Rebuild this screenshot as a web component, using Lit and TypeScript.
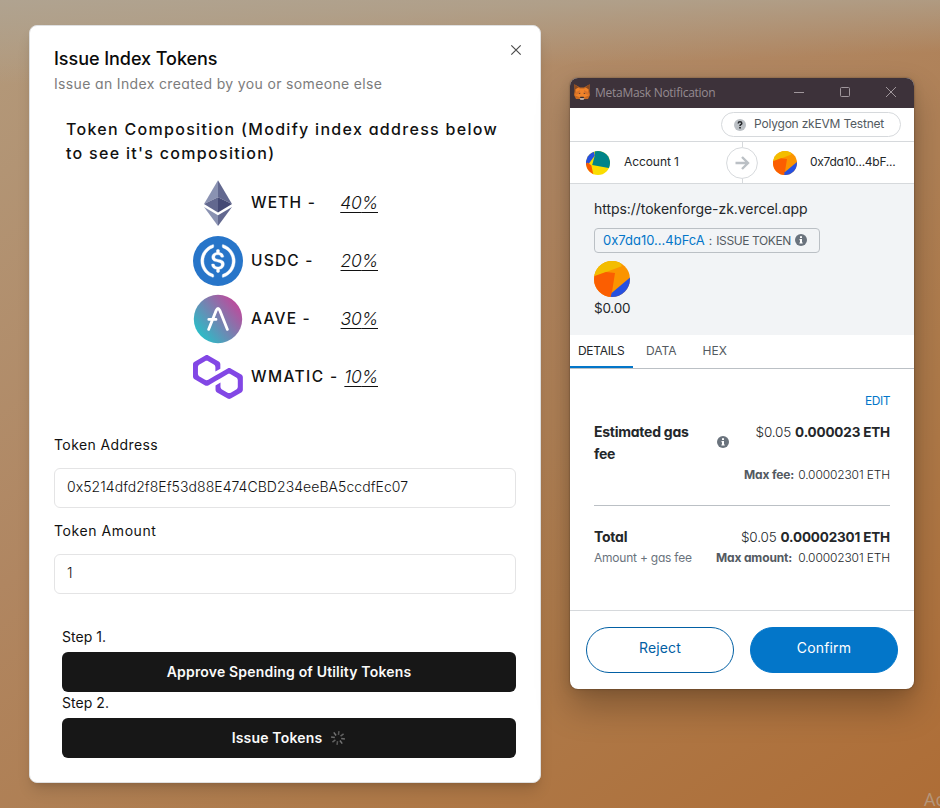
import { LitElement, html, css, svg } from "lit";
import { customElement, property } from "lit/decorators.js";

const ethIcon = svg`
  <path fill="#8a92b2" d="M25 2.3 11 26 25 19.2z"/>
  <path fill="#62688f" d="M25 2.3 39 26 25 19.2z"/>
  <path fill="#62688f" d="M11 26 25 19.2V34.4z"/>
  <path fill="#454a75" d="M39 26 25 19.2V34.4z"/>
  <path fill="#8a92b2" d="M11 29 25 37.3V48z"/>
  <path fill="#62688f" d="M39 29 25 37.3V48z"/>`;

const usdcIcon = svg`
  <g transform="scale(1.5625)">
    <circle cx="16" cy="16" r="16" fill="#2775c9"/>
    <g fill="#fff" stroke="#fff" stroke-width=".25">
      <path d="M20.022 18.124c0-2.124-1.28-2.852-3.84-3.156-1.828-.243-2.193-.728-2.193-1.578 0-.85.61-1.396 1.828-1.396 1.097 0 1.707.364 2.011 1.275a.458.458 0 00.427.303h.975a.416.416 0 00.427-.425v-.06a3.04 3.04 0 00-2.743-2.489V9.142c0-.243-.183-.425-.487-.486h-.915c-.243 0-.426.182-.487.486v1.396c-1.829.242-2.986 1.456-2.986 2.974 0 2.002 1.218 2.791 3.778 3.095 1.707.303 2.255.668 2.255 1.639 0 .97-.853 1.638-2.011 1.638-1.585 0-2.133-.667-2.316-1.578-.06-.242-.244-.364-.427-.364h-1.036a.416.416 0 00-.426.425v.06c.243 1.518 1.219 2.61 3.23 2.914v1.457c0 .242.183.425.487.485h.915c.243 0 .426-.182.487-.485V21.34c1.829-.303 3.047-1.578 3.047-3.217z"/>
      <path d="M12.892 24.497c-4.754-1.7-7.192-6.98-5.424-11.653.914-2.55 2.925-4.491 5.424-5.402.244-.121.365-.303.365-.607v-.85c0-.242-.121-.424-.365-.485-.061 0-.183 0-.244.06a10.895 10.895 0 00-7.13 13.717c1.096 3.4 3.717 6.01 7.13 7.102.244.121.488 0 .548-.243.061-.06.061-.122.061-.243v-.85c0-.182-.182-.424-.365-.546zm6.46-18.936c-.244-.122-.488 0-.548.242-.061.061-.061.122-.061.243v.85c0 .243.182.485.365.607 4.754 1.7 7.192 6.98 5.424 11.653-.914 2.55-2.925 4.491-5.424 5.402-.244.121-.365.303-.365.607v.85c0 .242.121.424.365.485.061 0 .183 0 .244-.06a10.895 10.895 0 007.13-13.717c-1.096-3.46-3.778-6.07-7.13-7.162z"/>
    </g>
  </g>`;

const aaveIcon = svg`
  <defs><linearGradient id="aave" x1="0.12" y1="0.8" x2="0.85" y2="0.2">
    <stop offset="0" stop-color="#2ebac6"/><stop offset="1" stop-color="#b6509e"/>
  </linearGradient></defs>
  <circle cx="25" cy="25" r="24.2" fill="url(#aave)"/>
  <path d="M15.6 35.4 23.2 16.4Q25 12.6 26.8 16.4L34.4 35.4M15.8 25.4H23" fill="none" stroke="#fff" stroke-width="2.8" stroke-linecap="round"/>`;

const maticIcon = svg`
  <g transform="translate(0 3.2) scale(1.302)"><path fill="#8247e5" d="M29,10.2c-0.7-0.4-1.6-0.4-2.4,0L21,13.5l-3.8,2.1l-5.5,3.3c-0.7,0.4-1.6,0.4-2.4,0L5,16.3c-0.7-0.4-1.2-1.2-1.2-2.1v-5c0-0.8,0.4-1.6,1.2-2.1l4.3-2.5c0.7-0.4,1.6-0.4,2.4,0L16,7.2c0.7,0.4,1.2,1.2,1.2,2.1v3.3l3.8-2.2V7c0-0.8-0.4-1.6-1.2-2.1l-8-4.7c-0.7-0.4-1.6-0.4-2.4,0L1.2,5C0.4,5.4,0,6.2,0,7v9.4c0,0.8,0.4,1.6,1.2,2.1l8.1,4.7c0.7,0.4,1.6,0.4,2.4,0l5.5-3.2l3.8-2.2l5.5-3.2c0.7-0.4,1.6-0.4,2.4,0l4.3,2.5c0.7,0.4,1.2,1.2,1.2,2.1v5c0,0.8-0.4,1.6-1.2,2.1L29,28.8c-0.7,0.4-1.6,0.4-2.4,0l-4.3-2.5c-0.7-0.4-1.2-1.2-1.2-2.1V21l-3.8,2.2v3.3c0,0.8,0.4,1.6,1.2,2.1l8.1,4.7c0.7,0.4,1.6,0.4,2.4,0l8.1-4.7c0.7-0.4,1.2-1.2,1.2-2.1V17c0-0.8-0.4-1.6-1.2-2.1L29,10.2z"/></g>`;

const tokens = [
  { name: "WETH", share: 40, icon: ethIcon },
  { name: "USDC", share: 20, icon: usdcIcon },
  { name: "AAVE", share: 30, icon: aaveIcon },
  { name: "WMATIC", share: 10, icon: maticIcon },
];

const infoIcon = html`<svg width="12" height="12" viewBox="0 0 12 12">
  <circle cx="6" cy="6" r="6" fill="#6a737d"/>
  <path fill="#fff" d="M5 2.2h2v1.7H5zM4.5 5H7v3.4h.7v1.2H4.4V8.4H5V6.2h-.5z"/>
</svg>`;

const shared = css`
  * { box-sizing: border-box; }
  svg { display: block; flex: none; }
`;

/** Round avatar made of flat coloured shards. */
@customElement("account-avatar")
export class AccountAvatar extends LitElement {
  @property({ type: Number }) size = 24;
  @property() kind = "target";
  static styles = css`
    :host { display: block; flex: none; }
    svg { display: block; border-radius: 50%; }
  `;
  render() {
    return this.kind === "account"
      ? html`<svg width=${this.size} height=${this.size} viewBox="0 0 24 24">
          <path fill="#fadd00" d="M0 0h24v24H0z"/>
          <path fill="#018488" d="M8.6 0H24V17.3L6.2 13.9 8.9 4z"/>
          <path fill="#2650e0" d="M0 0H7.6L8.9 4.6 3 12.6 0 14.5z"/>
          <path fill="#f95a01" d="M1.6 11.4 5.4 14.6 7.4 24H0V12.5z"/>
        </svg>`
      : html`<svg width=${this.size} height=${this.size} viewBox="0 0 36 36">
          <path fill="#fb9400" d="M0 0h36v36H0z"/>
          <path fill="#f3bd00" d="M0 0H27L27.6 5.3 0 15.6z"/>
          <path fill="#fb5e01" d="M0 15.3 12 11 21 12 17.7 33 16.5 36H0z"/>
          <path fill="#2650e0" d="M36 16.6 17.6 32 16.6 36H36z"/>
        </svg>`;
  }
}

@customElement("issue-dialog")
export class IssueDialog extends LitElement {
  static styles = [shared, css`
    :host {
      display: flex; flex-direction: column; width: 512px; height: 758px;
      box-sizing: border-box; padding: 24px; background: #fff; border: 1px solid #dfe0e1;
      border-radius: 8px; color: #111;
      box-shadow: 0 10px 15px -3px rgba(0,0,0,.14), 0 4px 6px -4px rgba(0,0,0,.14);
    }
    header { display: flex; justify-content: space-between; }
    h2 { margin: 0; font-size: 18px; line-height: 18px; font-weight: 500; letter-spacing: -.05px; color: #0a0a0a; }
    .sub { margin: 6px 0 0; font-size: 14px; line-height: 20px; letter-spacing: .35px; color: #7c7c7c; }
    .close { margin: -7px -7px 0 0; }
    .comp { margin: 23px 0 0 12px; font-size: 16px; line-height: 24px; font-weight: 500; letter-spacing: 1.3px; white-space: nowrap; }
    .tokens { display: flex; flex-direction: column; gap: 8px; width: 185px; margin: 13px 0 0 139px; }
    .token { display: flex; align-items: center; height: 50px; }
    .name { margin-left: 8px; padding-bottom: 2px; font-size: 15.5px; font-weight: 500; letter-spacing: 1.2px; white-space: nowrap; }
    .token:last-child .name { letter-spacing: 1.4px; }
    .share { margin-left: auto; padding-bottom: 2px; font-size: 17.5px; font-style: italic; font-weight: 300; letter-spacing: -.15px; text-decoration: underline; text-underline-offset: 3px; text-decoration-thickness: 1px; }
    .field { display: flex; flex-direction: column; gap: 13px; margin-top: 13px; }
    .field.first { margin-top: 33px; }
    label { font-size: 14px; line-height: 20px; letter-spacing: .4px; }
    .field:not(.first) label { letter-spacing: .58px; }
    .input { display: flex; align-items: center; height: 40px; padding: 0 12px 3px; border: 1px solid #e4e4e5; border-radius: 6px; font-size: 14px; font-weight: 300; letter-spacing: .06px; }
    .steps { display: flex; flex-direction: column; margin: 33px 0 0 8px; }
    .step { font-size: 14px; line-height: 20px; letter-spacing: .05px; margin-bottom: 5px; }
    .btn + .step { margin-top: 1px; }
    .btn { display: flex; align-items: center; justify-content: center; gap: 8px; height: 40px; padding-bottom: 2px; border-radius: 6px; background: #171717; color: #fafafa; font-size: 14px; font-weight: 600; letter-spacing: .18px; }
    .btn svg { margin-top: 2px; }
  `];
  render() {
    return html`
      <header>
        <div>
          <h2>Issue Index Tokens</h2>
          <p class="sub">Issue an Index created by you or someone else</p>
        </div>
        <svg class="close" width="14" height="14" viewBox="0 0 14 14"><path d="M2.3 2.3 11.7 11.7M11.7 2.3 2.3 11.7" stroke="#4d4d4d" stroke-width="1.2" fill="none"/></svg>
      </header>
      <div class="comp">Token Composition (Modify index address below<br>to see it's composition)</div>
      <div class="tokens">
        ${tokens.map(t => html`<div class="token">
          <svg width="50" height="50" viewBox="0 0 50 50">${t.icon}</svg>
          <span class="name">${t.name} -</span><span class="share">${t.share}%</span>
        </div>`)}
      </div>
      <div class="field first"><label>Token Address</label><div class="input">0x5214dfd2f8Ef53d88E474CBD234eeBA5ccdfEc07</div></div>
      <div class="field"><label>Token Amount</label><div class="input">1</div></div>
      <div class="steps">
        <div class="step">Step 1.</div>
        <div class="btn">Approve Spending of Utility Tokens</div>
        <div class="step">Step 2.</div>
        <div class="btn">Issue Tokens
          <svg width="16" height="16" viewBox="0 0 16 16">
            ${[0, 1, 2, 3, 4, 5, 6, 7].map(i => svg`<path d="M8 1V4.8" stroke="#fff" stroke-opacity=${0.28 + (i % 4) * 0.04} stroke-width="1.5" transform="rotate(${i * 45 + 8} 8 8)"/>`)}
          </svg>
        </div>
      </div>`;
  }
}

@customElement("wallet-window")
export class WalletWindow extends LitElement {
  static styles = [shared, css`
    :host {
      display: flex; flex-direction: column; width: 344px; height: 611px; overflow: hidden;
      background: #fff; border-radius: 8px; color: #24272a; font-size: 12px; white-space: nowrap;
      box-shadow: 0 0 2px rgba(0,0,0,.4), 0 18px 34px rgba(0,0,0,.26), 0 2px 12px rgba(0,0,0,.1);
    }
    .bar { display: flex; align-items: center; height: 30px; padding: 0 17px 0 4px; background: #3d323a; color: #958b91; font: 12px "Open Sans", sans-serif; letter-spacing: -.27px; }
    .bar svg:first-child { margin-bottom: 2px; }
    .bar .title { margin-left: 5px; padding-bottom: 1px; flex: 1; }
    .bar .ctl { margin-bottom: 2px; }
    .net { display: flex; justify-content: flex-end; height: 34px; padding: 4px 13px 0 0; border-bottom: 1px solid #d6d9dc; }
    .pill { display: flex; align-items: center; width: 180px; height: 25px; padding: 0 0 0 12px; gap: 8px; border: 1px solid #d6d9dc; border-radius: 13px; color: #535a61; letter-spacing: -.2px; }
    .pill span { padding-bottom: 2px; }
    .accounts { display: flex; align-items: center; height: 42px; padding-left: 16px; border-bottom: 1px solid #d6d9dc; }
    .accounts span { padding-bottom: 2px; }
    .from { margin-left: 14px; width: 102px; letter-spacing: -.08px; }
    .to { margin-left: 13px; letter-spacing: -.27px; }
    .arrow { margin-right: 15px; }
    .summary { display: flex; flex-direction: column; align-items: flex-start; height: 151px; padding: 15px 24px 0; background: #f2f4f6; }
    .origin { font-size: 14px; line-height: 20px; letter-spacing: -.04px; }
    .method { display: flex; align-items: center; width: 226px; height: 25px; margin: 9px 0 8px; padding: 0 8px 1px; border: 1px solid #bbc0c5; border-radius: 4px; color: #535a61; }
    .addr { color: #0376c9; font-size: 13px; }
    .fn { margin: 0 4px 0 4px; letter-spacing: -.4px; }
    .colon { margin-left: 4px; }
    .usd { margin-top: 1px; font-size: 13.5px; line-height: 20px; letter-spacing: -.25px; }
    .tabs { display: flex; height: 34px; border-bottom: 1px solid #bbc0c5; color: #535a61; line-height: 32px; }
    .tab { padding: 0 13px; letter-spacing: 0; }
    .tab.on { width: 63px; padding: 0 0 0 8px; color: #24272a; border-bottom: 2px solid #0376c9; letter-spacing: -.3px; }
    .body { height: 241px; padding: 22px 24px 0; }
    .edit { text-align: right; color: #0376c9; line-height: 20px; letter-spacing: -.45px; }
    .row { display: flex; justify-content: space-between; }
    .gas { height: 44px; margin-top: 10px; font-size: 14px; line-height: 22px; }
    .gas .left { display: flex; align-items: center; width: 135px; justify-content: space-between; }
    .gas svg { margin-bottom: 2px; }
    .lbl { font-weight: 700; font-size: 14px; letter-spacing: -.25px; }
    .amt { font-size: 13.5px; letter-spacing: -.17px; }
    .amt i { font-style: normal; font-weight: 300; margin-right: 4px; }
    .amt b { font-weight: 700; }
    .sub { line-height: 20px; color: #24272a; }
    .sub b { color: #535a61; font-weight: 700; letter-spacing: -.14px; margin-right: 4px; }
    .sub i { font-style: normal; font-weight: 300; letter-spacing: -.13px; }
    .max { text-align: right; }
    .rule { height: 1px; background: #bbc0c5; margin: 20px 0 20px; }
    .total { line-height: 22px; }
    .wide b { margin-right: 6px; }
    .note { color: #6a737d; letter-spacing: -.22px; }
    footer { display: flex; gap: 16px; height: 79px; padding: 16px 16px 0; border-top: 1px solid #d6d9dc; }
    .btn { flex: 1; height: 46px; line-height: 40px; border: 1px solid #0260a4; border-radius: 23px; text-align: center; color: #0260a4; font-size: 14px; letter-spacing: .15px; }
    .btn.go { background: #0376c9; border-color: #0376c9; color: #fff; }
  `];
  render() {
    return html`
      <div class="bar">
        <svg width="16" height="16" viewBox="0 0 16 16">
          <path fill="#c96a22" d="M.3.2 6 3.6H10L15.7.2 15.4 7 16 11 14 15H2L0 11 .6 7z"/>
          <path fill="#f0832a" d="M1.2 2.2 6 4.8H10L14.8 2.2 13.8 8 15.2 11.3 11 13H5L.8 11.3 2.2 8z"/>
          <path fill="#8a4a20" d="M.3.2 4.6 3.2 1.2 5.4zM15.7.2 11.4 3.2 14.8 5.4z"/>
          <path fill="#d8722a" d="M2.4 8 6.2 6 5.4 9.4 1 11.2zM13.6 8 9.8 6 10.6 9.4 15 11.2z"/>
          <path fill="#2e2a30" d="M4.7 9.2 6.3 8.8 6.1 10zM11.3 9.2 9.7 8.8 9.9 10zM6.3 12.8H9.7L10 14.4H6z"/>
          <path fill="#d9cabd" d="M5.6 14.2H10.4L9.6 15.7H6.4z"/>
        </svg>
        <span class="title">MetaMask Notification</span>
        <svg class="ctl" width="104" height="12" viewBox="0 0 104 12" fill="none" stroke="#a0979c">
          <path d="M1 6.5H11"/><rect x="47.5" y="1.5" width="9" height="9" rx="1"/><path d="M93 1 103 11M103 1 93 11"/>
        </svg>
      </div>
      <div class="net"><div class="pill">
        <svg width="12" height="12" viewBox="0 0 12 12"><circle cx="6" cy="6" r="6" fill="#bbc0c5"/><path d="M4.2 4.5Q4.3 2.8 6 2.8T7.8 4.3Q7.8 5.2 6.8 5.7Q6 6.1 6 7" fill="none" stroke="#24272a" stroke-width="1.5"/><path fill="#24272a" d="M5.2 7.9h1.6v1.5H5.2z"/></svg>
        <span>Polygon zkEVM Testnet</span>
      </div></div>
      <div class="accounts">
        <account-avatar kind="account"></account-avatar>
        <span class="from">Account 1</span>
        <svg class="arrow" width="32" height="41" viewBox="0 0 32 41" fill="none">
          <path d="M16.5 0V5M16.5 36.5V41" stroke="#d6d9dc"/>
          <circle cx="16" cy="21" r="15.4" stroke="#d6d9dc"/>
          <path d="M9.5 21H21.5M16 15 22 21 16 27" stroke="#bbc0c5" stroke-width="2.4"/>
        </svg>
        <account-avatar></account-avatar>
        <span class="to">0x7da10...4bF...</span>
      </div>
      <div class="summary">
        <div class="origin">https://tokenforge-zk.vercel.app</div>
        <div class="method"><span class="addr">0x7da10...4bFcA</span><span class="colon">:</span><span class="fn">ISSUE TOKEN</span>${infoIcon}</div>
        <account-avatar size="36"></account-avatar>
        <div class="usd">$0.00</div>
      </div>
      <div class="tabs"><div class="tab on">DETAILS</div><div class="tab">DATA</div><div class="tab">HEX</div></div>
      <div class="body">
        <div class="edit">EDIT</div>
        <div class="row gas">
          <div class="left"><div class="lbl">Estimated gas<br>fee</div>${infoIcon}</div>
          <div class="amt"><i>$0.05</i><b>0.000023 ETH</b></div>
        </div>
        <div class="sub max"><b>Max fee:</b><i>0.00002301 ETH</i></div>
        <div class="rule"></div>
        <div class="row total"><div class="lbl">Total</div><div class="amt"><i>$0.05</i><b>0.00002301 ETH</b></div></div>
        <div class="row sub"><span class="note">Amount + gas fee</span><span class="wide"><b>Max amount:</b><i>0.00002301 ETH</i></span></div>
      </div>
      <footer><div class="btn">Reject</div><div class="btn go">Confirm</div></footer>`;
  }
}

@customElement("app-root")
export class AppRoot extends LitElement {
  static styles = [shared, css`
    :host {
      display: block; position: relative; width: 940px; height: 808px; overflow: hidden;
      font-family: Inter, "Liberation Sans", sans-serif; font-feature-settings: "cv11";
      background:
        linear-gradient(178deg, #b0a390 0, rgba(176,161,140,.9) 24px, rgba(176,145,115,0) 85px),
        linear-gradient(145deg, #b39a7c 0%, #b08661 40%, #ae7a4a 70%, #ae6d36 100%);
    }
    issue-dialog { position: absolute; left: 29px; top: 25px; }
    wallet-window { position: absolute; left: 570px; top: 78px; }
    .os { position: absolute; left: 924px; top: 787px; font: 18px/24px "Open Sans", sans-serif; color: #b5967b; white-space: nowrap; }
  `];
  render() {
    return html`<issue-dialog></issue-dialog><wallet-window></wallet-window><div class="os">Ac</div>`;
  }
}
